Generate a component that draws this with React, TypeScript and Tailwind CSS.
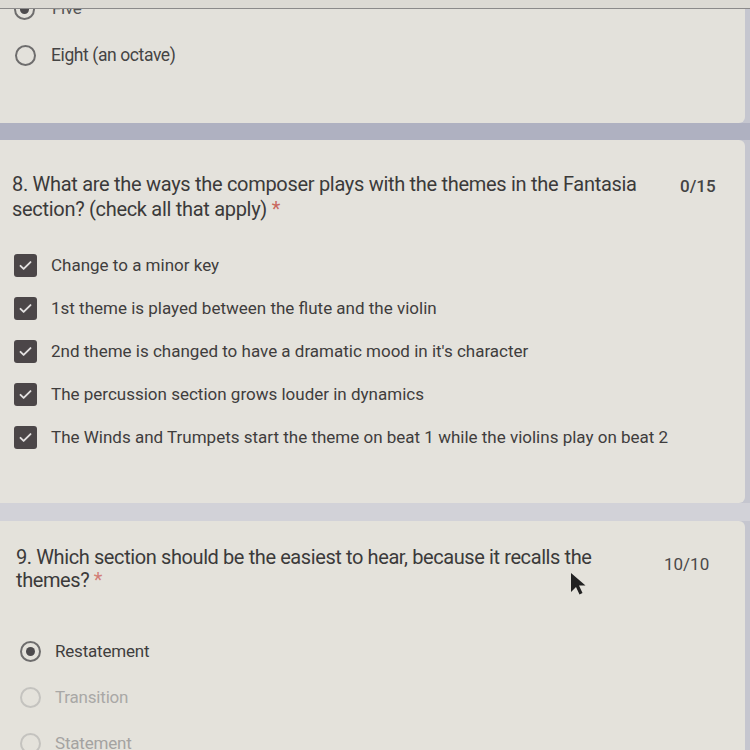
const CHOICES = [
  "Change to a minor key",
  "1st theme is played between the flute and the violin",
  "2nd theme is changed to have a dramatic mood in it's character",
  "The percussion section grows louder in dynamics",
  "The Winds and Trumpets start the theme on beat 1 while the violins play on beat 2",
];

function Radio({ checked, faded }: { checked?: boolean; faded?: boolean }) {
  return (
    <span
      className={`w-[21px] h-[21px] shrink-0 rounded-full border-2 flex items-center justify-center ${
        faded ? "border-[#c4c3bf]" : "border-[#6e6d6d]"
      }`}
    >
      {checked && <span className="w-[9px] h-[9px] rounded-full bg-[#4d4b4d]" />}
    </span>
  );
}

function CheckBox() {
  return (
    <span className="w-[23px] h-[23px] shrink-0 rounded-[3px] bg-[#4b4648] flex items-center justify-center">
      <svg width="15" height="15" viewBox="0 0 24 24" fill="none">
        <path
          d="M4 12.5l5 5L20 6.5"
          stroke="#e2e0e0"
          strokeWidth="3"
          strokeLinecap="round"
          strokeLinejoin="round"
        />
      </svg>
    </span>
  );
}

export default function App() {
  return (
    <div
      className="relative w-[750px] h-[750px] overflow-hidden bg-[#c5c6cf] flex flex-col"
      style={{ fontFamily: "Roboto, 'Liberation Sans', sans-serif" }}
    >
      {/* header edge */}
      <div className="h-[9px] shrink-0 bg-[#dcdad4] border-b border-[#8b8a8a] relative z-10" />

      {/* previous question tail */}
      <div className="h-[114px] shrink-0 mr-[5px] bg-[#e3e1db] rounded-br-[6px] overflow-hidden flex flex-col">
        <div className="-mt-[10px] h-[20px] flex items-center gap-[17px] pl-[14px]">
          <Radio checked />
          <span className="text-[17px] text-[#555] tracking-[-0.3px]">Five</span>
        </div>
        <div className="mt-[26px] h-[20px] flex items-center gap-[15px] pl-[15px]">
          <Radio />
          <span className="text-[17.5px] text-[#454444] tracking-[-0.4px]">Eight (an octave)</span>
        </div>
      </div>

      <div className="h-[17px] shrink-0 bg-[#afb1c1]" />

      {/* question 8 */}
      <div className="h-[363px] shrink-0 mr-[5px] bg-[#e4e2dc] rounded-r-[6px] pt-[32px] px-[12px]">
        <div className="flex items-start">
          <p className="w-[640px] text-[20px] leading-[25px] text-[#3b3a3a] tracking-[-0.3px]">
            8. What are the ways the composer plays with the themes in the Fantasia section? (check all
            that apply) <span className="text-[#c9685f]">*</span>
          </p>
          <span className="ml-[28px] mt-[2px] text-[17px] leading-[24px] text-[#444] font-medium">0/15</span>
        </div>
        <div className="mt-[32px] flex flex-col gap-[20px] pl-[2px]">
          {CHOICES.map((c) => (
            <div key={c} className="h-[23px] flex items-center gap-[14px]">
              <CheckBox />
              <span className="text-[17px] text-[#3f3d3d]">{c}</span>
            </div>
          ))}
        </div>
      </div>

      <div className="h-[18px] shrink-0 bg-[#d2d2d8]" />

      {/* question 9 */}
      <div className="flex-1 mr-[5px] bg-[#e4e2db] rounded-tr-[6px] pt-[25px] pl-[16px]">
        <div className="flex items-start">
          <p className="w-[600px] text-[20px] leading-[23px] text-[#3b3a3a] tracking-[-0.4px]">
            9. Which section should be the easiest to hear, because it recalls the themes?{" "}
            <span className="text-[#d27e77]">*</span>
          </p>
          <span className="ml-[48px] mt-[6px] text-[17px] leading-[24px] text-[#4a4949]">10/10</span>
        </div>
        <div className="mt-[49px] flex flex-col gap-[25px] pl-[4px]">
          <div className="h-[21px] flex items-center gap-[14px]">
            <Radio checked />
            <span className="text-[17px] text-[#3f3e3e] tracking-[-0.2px]">Restatement</span>
          </div>
          <div className="h-[21px] flex items-center gap-[14px]">
            <Radio faded />
            <span className="text-[17px] text-[#a9a8a6] tracking-[-0.2px]">Transition</span>
          </div>
          <div className="h-[21px] flex items-center gap-[14px]">
            <Radio faded />
            <span className="text-[17px] text-[#a4a3a1] tracking-[-0.2px]">Statement</span>
          </div>
        </div>
      </div>

      {/* mouse cursor */}
      <svg className="absolute left-[570px] top-[572px]" width="16" height="24" viewBox="0 0 16 24">
        <path d="M1 1v19l5-5 3.5 7.5 3-1.5L9 13.5h6.5z" fill="#222" />
      </svg>
    </div>
  );
}
